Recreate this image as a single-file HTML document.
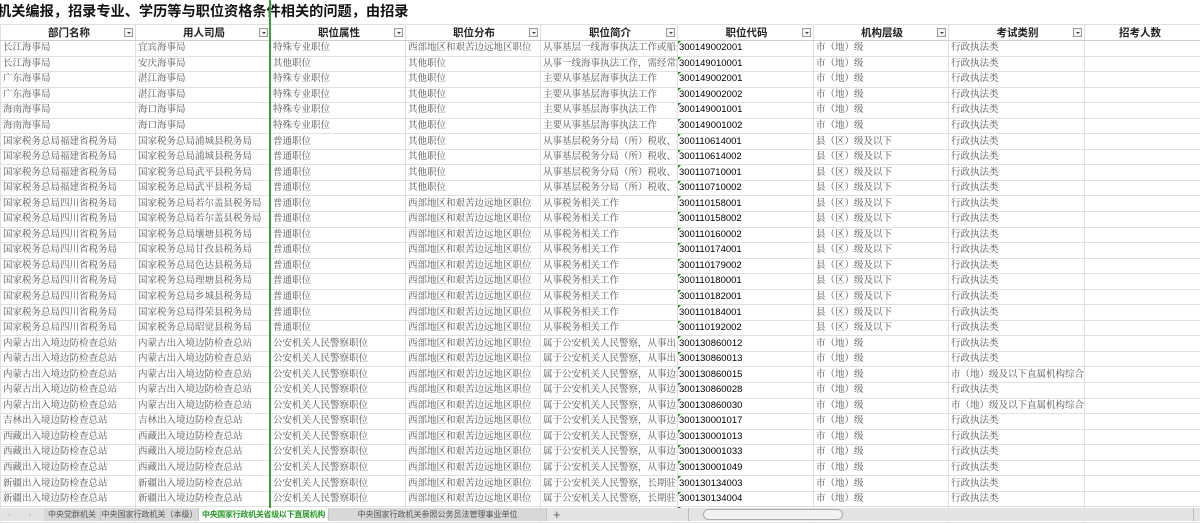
<!DOCTYPE html>
<html><head><meta charset="utf-8"><style>
*{margin:0;padding:0;box-sizing:border-box}
body{width:1200px;height:521px;overflow:hidden;background:#fff;position:relative;font-family:"Liberation Serif","Noto Serif CJK SC",serif}
.title{position:absolute;left:-3px;top:1px;height:23px;font:bold 14.2px "Liberation Sans","Noto Sans CJK SC",sans-serif;color:#111;white-space:nowrap;line-height:22px;z-index:2}
table{position:absolute;left:0;top:24px;border-collapse:collapse;table-layout:fixed;width:1240px}
td{height:15.55px;border:1px solid #e0e0e0;font-size:9.5px;color:#555;white-space:nowrap;overflow:hidden;padding:0 0 0 2px;line-height:12px;position:relative}
tr.h td{height:16px;font:bold 10.5px "Liberation Sans","Noto Sans CJK SC",sans-serif;color:#222;text-align:center;border-bottom:1px solid #cfcfcf}
.dd{position:absolute;right:2px;top:3px;width:9px;height:9px;border:1px solid #999;background:#f4f4f4}
.dd:after{content:"";position:absolute;left:2px;top:3px;border-left:2px solid transparent;border-right:2px solid transparent;border-top:2px solid #444}
td.n{color:#000;font-family:"Liberation Sans",sans-serif;font-size:9.5px;padding-left:1px}
td.n:before{content:"";position:absolute;left:0;top:0;border-top:3px solid #1a8a1a;border-right:3px solid transparent}
.vl{position:absolute;left:269px;top:0;width:2px;height:508px;background:#3f9a3f;z-index:3}
.tabs{position:absolute;left:0;top:508px;width:1200px;height:13px;background:#e4e4e4;font:8px "Liberation Sans","Noto Sans CJK SC",sans-serif;color:#555;white-space:nowrap;overflow:hidden;z-index:5}
.tab{position:absolute;top:0;height:13px;line-height:13px;text-align:center;background:#d8d8d8;border-right:1px solid #c4c4c4;white-space:nowrap;overflow:hidden}
.act{background:#fff;color:#2a9a2a;font-weight:bold;letter-spacing:-0.3px}
</style></head><body>
<div class="title">机关编报，招录专业、学历等与职位资格条件相关的问题，由招录</div>
<div class="vl"></div>
<table>
<colgroup><col style="width:135px"><col style="width:135px"><col style="width:135px"><col style="width:135px"><col style="width:137px"><col style="width:136px"><col style="width:135px"><col style="width:136px"><col style="width:156px"></colgroup>
<tr class="h"><td>部门名称<span class="dd"></span></td><td>用人司局<span class="dd"></span></td><td>职位属性<span class="dd"></span></td><td>职位分布<span class="dd"></span></td><td>职位简介<span class="dd"></span></td><td>职位代码<span class="dd"></span></td><td>机构层级<span class="dd"></span></td><td>考试类别<span class="dd"></span></td><td style="text-align:left;padding-left:34px">招考人数</td></tr>
<tr><td>长江海事局</td><td>宜宾海事局</td><td>特殊专业职位</td><td>西部地区和艰苦边远地区职位</td><td>从事基层一线海事执法工作或船舶交</td><td class="n">300149002001</td><td>市（地）级</td><td>行政执法类</td><td></td></tr>
<tr><td>长江海事局</td><td>安庆海事局</td><td>其他职位</td><td>其他职位</td><td>从事一线海事执法工作，需经常随船</td><td class="n">300149010001</td><td>市（地）级</td><td>行政执法类</td><td></td></tr>
<tr><td>广东海事局</td><td>湛江海事局</td><td>特殊专业职位</td><td>其他职位</td><td>主要从事基层海事执法工作</td><td class="n">300149002001</td><td>市（地）级</td><td>行政执法类</td><td></td></tr>
<tr><td>广东海事局</td><td>湛江海事局</td><td>特殊专业职位</td><td>其他职位</td><td>主要从事基层海事执法工作</td><td class="n">300149002002</td><td>市（地）级</td><td>行政执法类</td><td></td></tr>
<tr><td>海南海事局</td><td>海口海事局</td><td>特殊专业职位</td><td>其他职位</td><td>主要从事基层海事执法工作</td><td class="n">300149001001</td><td>市（地）级</td><td>行政执法类</td><td></td></tr>
<tr><td>海南海事局</td><td>海口海事局</td><td>特殊专业职位</td><td>其他职位</td><td>主要从事基层海事执法工作</td><td class="n">300149001002</td><td>市（地）级</td><td>行政执法类</td><td></td></tr>
<tr><td>国家税务总局福建省税务局</td><td>国家税务总局浦城县税务局</td><td>普通职位</td><td>其他职位</td><td>从事基层税务分局（所）税收、社会</td><td class="n">300110614001</td><td>县（区）级及以下</td><td>行政执法类</td><td></td></tr>
<tr><td>国家税务总局福建省税务局</td><td>国家税务总局浦城县税务局</td><td>普通职位</td><td>其他职位</td><td>从事基层税务分局（所）税收、社会</td><td class="n">300110614002</td><td>县（区）级及以下</td><td>行政执法类</td><td></td></tr>
<tr><td>国家税务总局福建省税务局</td><td>国家税务总局武平县税务局</td><td>普通职位</td><td>其他职位</td><td>从事基层税务分局（所）税收、社会</td><td class="n">300110710001</td><td>县（区）级及以下</td><td>行政执法类</td><td></td></tr>
<tr><td>国家税务总局福建省税务局</td><td>国家税务总局武平县税务局</td><td>普通职位</td><td>其他职位</td><td>从事基层税务分局（所）税收、社会</td><td class="n">300110710002</td><td>县（区）级及以下</td><td>行政执法类</td><td></td></tr>
<tr><td>国家税务总局四川省税务局</td><td>国家税务总局若尔盖县税务局</td><td>普通职位</td><td>西部地区和艰苦边远地区职位</td><td>从事税务相关工作</td><td class="n">300110158001</td><td>县（区）级及以下</td><td>行政执法类</td><td></td></tr>
<tr><td>国家税务总局四川省税务局</td><td>国家税务总局若尔盖县税务局</td><td>普通职位</td><td>西部地区和艰苦边远地区职位</td><td>从事税务相关工作</td><td class="n">300110158002</td><td>县（区）级及以下</td><td>行政执法类</td><td></td></tr>
<tr><td>国家税务总局四川省税务局</td><td>国家税务总局壤塘县税务局</td><td>普通职位</td><td>西部地区和艰苦边远地区职位</td><td>从事税务相关工作</td><td class="n">300110160002</td><td>县（区）级及以下</td><td>行政执法类</td><td></td></tr>
<tr><td>国家税务总局四川省税务局</td><td>国家税务总局甘孜县税务局</td><td>普通职位</td><td>西部地区和艰苦边远地区职位</td><td>从事税务相关工作</td><td class="n">300110174001</td><td>县（区）级及以下</td><td>行政执法类</td><td></td></tr>
<tr><td>国家税务总局四川省税务局</td><td>国家税务总局色达县税务局</td><td>普通职位</td><td>西部地区和艰苦边远地区职位</td><td>从事税务相关工作</td><td class="n">300110179002</td><td>县（区）级及以下</td><td>行政执法类</td><td></td></tr>
<tr><td>国家税务总局四川省税务局</td><td>国家税务总局理塘县税务局</td><td>普通职位</td><td>西部地区和艰苦边远地区职位</td><td>从事税务相关工作</td><td class="n">300110180001</td><td>县（区）级及以下</td><td>行政执法类</td><td></td></tr>
<tr><td>国家税务总局四川省税务局</td><td>国家税务总局乡城县税务局</td><td>普通职位</td><td>西部地区和艰苦边远地区职位</td><td>从事税务相关工作</td><td class="n">300110182001</td><td>县（区）级及以下</td><td>行政执法类</td><td></td></tr>
<tr><td>国家税务总局四川省税务局</td><td>国家税务总局得荣县税务局</td><td>普通职位</td><td>西部地区和艰苦边远地区职位</td><td>从事税务相关工作</td><td class="n">300110184001</td><td>县（区）级及以下</td><td>行政执法类</td><td></td></tr>
<tr><td>国家税务总局四川省税务局</td><td>国家税务总局昭觉县税务局</td><td>普通职位</td><td>西部地区和艰苦边远地区职位</td><td>从事税务相关工作</td><td class="n">300110192002</td><td>县（区）级及以下</td><td>行政执法类</td><td></td></tr>
<tr><td>内蒙古出入境边防检查总站</td><td>内蒙古出入境边防检查总站</td><td>公安机关人民警察职位</td><td>西部地区和艰苦边远地区职位</td><td>属于公安机关人民警察，从事出入境</td><td class="n">300130860012</td><td>市（地）级</td><td>行政执法类</td><td></td></tr>
<tr><td>内蒙古出入境边防检查总站</td><td>内蒙古出入境边防检查总站</td><td>公安机关人民警察职位</td><td>西部地区和艰苦边远地区职位</td><td>属于公安机关人民警察，从事出入境</td><td class="n">300130860013</td><td>市（地）级</td><td>行政执法类</td><td></td></tr>
<tr><td>内蒙古出入境边防检查总站</td><td>内蒙古出入境边防检查总站</td><td>公安机关人民警察职位</td><td>西部地区和艰苦边远地区职位</td><td>属于公安机关人民警察，从事边境管</td><td class="n">300130860015</td><td>市（地）级</td><td>市（地）级及以下直属机构综合管理</td><td></td></tr>
<tr><td>内蒙古出入境边防检查总站</td><td>内蒙古出入境边防检查总站</td><td>公安机关人民警察职位</td><td>西部地区和艰苦边远地区职位</td><td>属于公安机关人民警察，从事边境管</td><td class="n">300130860028</td><td>市（地）级</td><td>行政执法类</td><td></td></tr>
<tr><td>内蒙古出入境边防检查总站</td><td>内蒙古出入境边防检查总站</td><td>公安机关人民警察职位</td><td>西部地区和艰苦边远地区职位</td><td>属于公安机关人民警察，从事边境管</td><td class="n">300130860030</td><td>市（地）级</td><td>市（地）级及以下直属机构综合管理</td><td></td></tr>
<tr><td>吉林出入境边防检查总站</td><td>吉林出入境边防检查总站</td><td>公安机关人民警察职位</td><td>西部地区和艰苦边远地区职位</td><td>属于公安机关人民警察，从事边境管</td><td class="n">300130001017</td><td>市（地）级</td><td>行政执法类</td><td></td></tr>
<tr><td>西藏出入境边防检查总站</td><td>西藏出入境边防检查总站</td><td>公安机关人民警察职位</td><td>西部地区和艰苦边远地区职位</td><td>属于公安机关人民警察，从事边境综</td><td class="n">300130001013</td><td>市（地）级</td><td>行政执法类</td><td></td></tr>
<tr><td>西藏出入境边防检查总站</td><td>西藏出入境边防检查总站</td><td>公安机关人民警察职位</td><td>西部地区和艰苦边远地区职位</td><td>属于公安机关人民警察，从事边境综</td><td class="n">300130001033</td><td>市（地）级</td><td>行政执法类</td><td></td></tr>
<tr><td>西藏出入境边防检查总站</td><td>西藏出入境边防检查总站</td><td>公安机关人民警察职位</td><td>西部地区和艰苦边远地区职位</td><td>属于公安机关人民警察，从事边境综</td><td class="n">300130001049</td><td>市（地）级</td><td>行政执法类</td><td></td></tr>
<tr><td>新疆出入境边防检查总站</td><td>新疆出入境边防检查总站</td><td>公安机关人民警察职位</td><td>西部地区和艰苦边远地区职位</td><td>属于公安机关人民警察，长期驻守边</td><td class="n">300130134003</td><td>市（地）级</td><td>行政执法类</td><td></td></tr>
<tr><td>新疆出入境边防检查总站</td><td>新疆出入境边防检查总站</td><td>公安机关人民警察职位</td><td>西部地区和艰苦边远地区职位</td><td>属于公安机关人民警察，长期驻守边</td><td class="n">300130134004</td><td>市（地）级</td><td>行政执法类</td><td></td></tr>
<tr><td></td><td></td><td></td><td></td><td></td><td class="n"></td><td></td><td></td><td></td></tr>
</table>
<div class="tabs">
<div style="position:absolute;left:8px;top:0;line-height:13px;color:#bbb;letter-spacing:8px">‹ › ›</div>
<div class="tab" style="left:44px;width:57px">中央党群机关</div>
<div class="tab" style="left:101px;width:98px">中央国家行政机关（本级）</div>
<div class="tab act" style="left:199px;width:130px">中央国家行政机关省级以下直属机构</div>
<div class="tab" style="left:329px;width:218px">中央国家行政机关参照公务员法管理事业单位</div>
<div style="position:absolute;left:553px;top:-1px;font-size:13px;color:#666">+</div>
<div style="position:absolute;left:688px;top:0;width:2px;height:13px;border-left:1px solid #bbb"></div>
<div style="position:absolute;left:703px;top:1px;width:140px;height:11px;border:1px solid #aaa;border-radius:6px;background:#f2f2f2"></div>
<div style="position:absolute;left:1193px;top:0;width:2px;height:13px;border-left:1px solid #bbb"></div>
</div>
</body></html>
